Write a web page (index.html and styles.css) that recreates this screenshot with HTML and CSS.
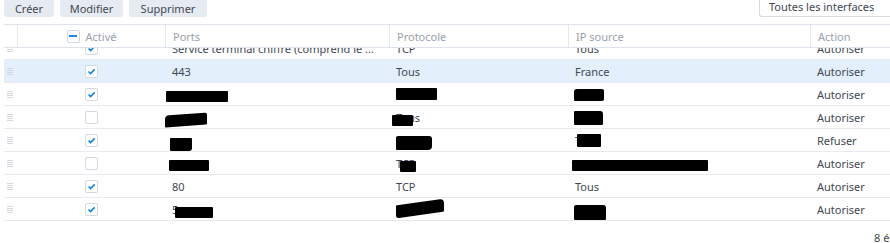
FILE: index.html
```html
<!DOCTYPE html>
<html>
<head>
  <title>Pare-feu</title>
  <link rel="stylesheet" href="styles.css">
</head>
<body>
  <div class="panel">
    <div class="toolbar">
      <button class="btn btn-create">Créer</button>
      <button class="btn btn-edit">Modifier</button>
      <button class="btn btn-delete">Supprimer</button>
      <div class="spacer"></div>
      <div class="select">Toutes les interfaces</div>
    </div>

    <div class="grid">
      <div class="row head">
        <div class="cell"></div>
        <div class="cell center">
          <span class="check mixed"><i></i></span>
          <span>Activé</span>
        </div>
        <div class="cell">Ports</div>
        <div class="cell">Protocole</div>
        <div class="cell">IP source</div>
        <div class="cell">Action</div>
      </div>

      <div class="body">
        <div class="rows">
          <div class="row">
            <div class="cell"><span class="handle"></span></div>
            <div class="cell center"><span class="check on"><svg viewBox="0 0 13 13"><path d="M3 6.6 L5.4 9 L10.2 4"/></svg></span></div>
            <div class="cell">Service terminal chiffré (comprend le ...</div>
            <div class="cell">TCP</div>
            <div class="cell">Tous</div>
            <div class="cell">Autoriser</div>
          </div>

          <div class="row selected">
            <div class="cell"><span class="handle"></span></div>
            <div class="cell center"><span class="check on"><svg viewBox="0 0 13 13"><path d="M3 6.6 L5.4 9 L10.2 4"/></svg></span></div>
            <div class="cell">443</div>
            <div class="cell">Tous</div>
            <div class="cell">France</div>
            <div class="cell">Autoriser</div>
          </div>

          <div class="row">
            <div class="cell"><span class="handle"></span></div>
            <div class="cell center"><span class="check on"><svg viewBox="0 0 13 13"><path d="M3 6.6 L5.4 9 L10.2 4"/></svg></span></div>
            <div class="cell"><span class="mask m-2a"></span></div>
            <div class="cell">TCP<span class="mask m-2b"></span></div>
            <div class="cell"><span class="mask m-2c"></span></div>
            <div class="cell">Autoriser</div>
          </div>

          <div class="row">
            <div class="cell"><span class="handle"></span></div>
            <div class="cell center"><span class="check"></span></div>
            <div class="cell"><span class="mask m-3a"></span></div>
            <div class="cell">Tous<span class="mask m-3b"></span></div>
            <div class="cell"><span class="mask m-3c"></span></div>
            <div class="cell">Autoriser</div>
          </div>

          <div class="row">
            <div class="cell"><span class="handle"></span></div>
            <div class="cell center"><span class="check on"><svg viewBox="0 0 13 13"><path d="M3 6.6 L5.4 9 L10.2 4"/></svg></span></div>
            <div class="cell"><span class="mask m-4a"></span></div>
            <div class="cell">TCP<span class="mask m-4b"></span></div>
            <div class="cell">Tous<span class="mask m-4c"></span></div>
            <div class="cell">Refuser</div>
          </div>

          <div class="row">
            <div class="cell"><span class="handle"></span></div>
            <div class="cell center"><span class="check"></span></div>
            <div class="cell"><span class="mask m-5a"></span></div>
            <div class="cell">TCP<span class="mask m-5b"></span></div>
            <div class="cell"><span class="mask m-5c"></span></div>
            <div class="cell">Autoriser</div>
          </div>

          <div class="row">
            <div class="cell"><span class="handle"></span></div>
            <div class="cell center"><span class="check on"><svg viewBox="0 0 13 13"><path d="M3 6.6 L5.4 9 L10.2 4"/></svg></span></div>
            <div class="cell">80</div>
            <div class="cell">TCP</div>
            <div class="cell">Tous</div>
            <div class="cell">Autoriser</div>
          </div>

          <div class="row">
            <div class="cell"><span class="handle"></span></div>
            <div class="cell center"><span class="check on"><svg viewBox="0 0 13 13"><path d="M3 6.6 L5.4 9 L10.2 4"/></svg></span></div>
            <div class="cell">5<span class="mask m-7a"></span></div>
            <div class="cell">TCP<span class="mask m-7b"></span></div>
            <div class="cell"><span class="mask m-7c"></span></div>
            <div class="cell">Autoriser</div>
          </div>
        </div>
      </div>
    </div>

    <div class="footer">8 éléments</div>
  </div>
</body>
</html>
```

FILE: styles.css
```css
body {
  margin: 0;
  background: #fff;
  font-family: "Noto Sans", "Open Sans", sans-serif;
  font-size: 11px;
  color: #3f4852;
}

.panel {
  padding-left: 4px;
}

.toolbar {
  display: flex;
  gap: 6px;
  height: 24px;
}

.btn {
  height: 17px;
  padding: 0;
  border: none;
  border-radius: 0 0 3px 3px;
  background: #e6ebf1;
  color: #3f4852;
  font-family: inherit;
  font-size: 11px;
  line-height: 15px;
  text-align: center;
}

.btn-create { width: 50px; }
.btn-edit { width: 63px; }
.btn-delete { width: 78px; }

.spacer {
  flex: 1;
}

.select {
  width: 121px;
  height: 16px;
  padding-left: 9px;
  border-left: 1px solid #d6dde5;
  border-bottom: 1px solid #d6dde5;
  border-radius: 0 0 0 3px;
  line-height: 14px;
  color: #3f4852;
}

.grid {
  border-top: 1px solid #dce3ea;
}

.row {
  display: grid;
  grid-template-columns: 13px 148px 224px 179px 242px 1fr;
  height: 23px;
  border-bottom: 1px solid #e6ebf0;
  box-sizing: border-box;
}

.row.head {
  border-bottom: 1px solid #dce3ea;
  color: #9aa1a9;
}

.row.head .cell + .cell {
  border-left: 1px solid #e4e9ee;
}

.cell {
  position: relative;
  display: flex;
  align-items: center;
  padding-left: 7px;
  white-space: nowrap;
  overflow: hidden;
}

.row .cell:first-child {
  padding-left: 3px;
}

.cell.center {
  justify-content: center;
  padding-left: 0;
  gap: 6px;
}

.body {
  height: 174px;
  overflow: hidden;
}

.rows {
  margin-top: -11px;
}

.row.selected {
  background: #e3effb;
}

.handle {
  width: 6px;
  height: 7px;
  background: repeating-linear-gradient(#d3d8de 0 1px, transparent 1px 2px);
}

.check {
  display: inline-flex;
  align-items: center;
  justify-content: center;
  width: 13px;
  height: 13px;
  border: 1px solid #d3d9e0;
  border-radius: 2px;
  background: #fff;
  box-sizing: border-box;
  flex: none;
}

.check svg {
  width: 13px;
  height: 13px;
}

.check path {
  fill: none;
  stroke: #0a84e8;
  stroke-width: 1.8;
}

.check.mixed i {
  width: 8px;
  height: 2px;
  background: #1a86e0;
}

/* caches noirs sur les données */
.mask {
  position: absolute;
  background: #000;
  border-radius: 1px;
}

.m-2a { left: 1px; top: 8px; width: 62px; height: 11px; }
.m-2b { left: 7px; top: 5px; width: 41px; height: 12px; }
.m-2c { left: 6px; top: 6px; width: 30px; height: 12px; border-radius: 3px 2px 2px 1px; }

.m-3a { left: 0; top: 8px; width: 42px; height: 12px; border-radius: 4px 2px 1px 1px; transform: skewY(-4deg); }
.m-3b { left: 3px; top: 9px; width: 21px; height: 11px; }
.m-3c { left: 6px; top: 5px; width: 29px; height: 14px; border-radius: 1px 3px 1px 1px; }

.m-4a { left: 5px; top: 9px; width: 22px; height: 13px; border-radius: 1px 1px 3px 1px; }
.m-4b { left: 7px; top: 7px; width: 36px; height: 14px; border-radius: 2px 3px 4px 1px; }
.m-4c { left: 9px; top: 5px; width: 24px; height: 13px; }

.m-5a { left: 4px; top: 8px; width: 40px; height: 11px; }
.m-5b { left: 11px; top: 9px; width: 16px; height: 11px; }
.m-5c { left: 4px; top: 8px; width: 136px; height: 11px; }

.m-7a { left: 10px; top: 9px; width: 38px; height: 11px; }
.m-7b { left: 7px; top: 4px; width: 48px; height: 13px; transform: skewY(-8deg); border-radius: 1px 4px 1px 3px; }
.m-7c { left: 6px; top: 7px; width: 32px; height: 15px; border-radius: 2px 3px 1px 1px; }

.footer {
  padding-top: 8px;
  white-space: nowrap;
  overflow: hidden;
  margin-left: 870px;
}
```
